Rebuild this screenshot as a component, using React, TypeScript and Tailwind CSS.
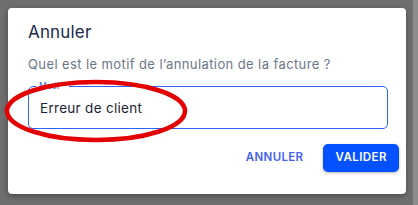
import { useState } from "react";

const App = () => {
  const [motif, setMotif] = useState("Erreur de client");

  return (
    <div className="relative h-[205px] w-[418px] overflow-hidden bg-[#6f6f6f] font-['Inter','Liberation_Sans',sans-serif]">
      <div className="absolute right-0 top-0 h-full w-[5px] bg-[#8c8c8c]" />
      <div className="absolute left-[8px] top-[8px] flex h-[186px] w-[398px] flex-col rounded-[4px] bg-white pl-[20px] pr-[7px] pt-[12px] shadow-[0_2px_6px_rgba(0,0,0,0.35)]">
        <h2 className="text-[17px] leading-[24px] tracking-[0.01em] text-[#1b2a4a]">Annuler</h2>
        <p className="mt-[11px] text-[13px] leading-[18px] tracking-[0.4px] text-[#6b7789]">
          Quel est le motif de l’annulation de la facture ?
        </p>
        <div className="relative mt-[13px] h-[43px] w-[360px] rounded-[5px] border border-[#2d63f6]">
          <span className="absolute -top-[7px] left-[7px] bg-white px-[3px] text-[8.5px] leading-[12px] text-[#2d63f6]">
            Motif *
          </span>
          <input
            autoFocus
            value={motif}
            onChange={(e) => setMotif(e.target.value)}
            className="h-full w-full bg-transparent px-[11px] text-[13.5px] tracking-[0.3px] text-[#1a2436] caret-[#1a2436] outline-none"
          />
        </div>
        <div className="mt-[15px] flex items-center justify-end gap-[20px]">
          <button className="text-[11.5px] font-semibold tracking-[0.03em] text-[#4461f2]">ANNULER</button>
          <button className="h-[28px] rounded-[5px] bg-[#0351ff] px-[12px] text-[11.5px] font-semibold tracking-[0.04em] text-white shadow-[0_1px_3px_rgba(0,0,0,0.3)]">
            VALIDER
          </button>
        </div>
      </div>
      <svg className="pointer-events-none absolute left-0 top-0" width="418" height="205">
        <ellipse cx="96" cy="111" rx="89" ry="29" fill="none" stroke="#e50000" strokeWidth="4.5" />
      </svg>
    </div>
  );
};

export default App;
